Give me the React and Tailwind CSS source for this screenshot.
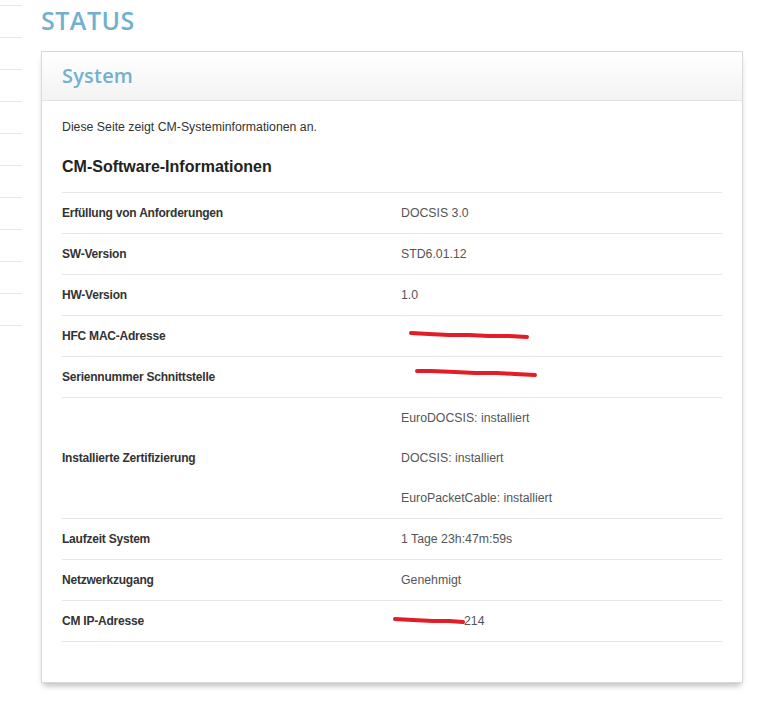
import React from "react";

const Scribble = ({ w, h, pts }) => (
  <svg width={w} height={h} className="block" viewBox={`0 0 ${w} ${h}`}>
    <polyline
      points={pts}
      fill="none"
      stroke="#e21d25"
      strokeWidth="4"
      strokeLinecap="round"
      strokeLinejoin="round"
    />
  </svg>
);

const Row = ({ label, children }) => (
  <div className="flex h-[41px] items-center border-b border-[#e6e6e6]">
    <div className="w-[339px] text-[12px] font-bold tracking-[-0.22px] text-[#333]">{label}</div>
    <div className="flex-1 text-[12.3px] text-[#555]">{children}</div>
  </div>
);

export default function App() {
  return (
    <div
      className="relative h-[707px] w-[769px] overflow-hidden bg-white"
      style={{ fontFamily: '"Liberation Sans", Arial, sans-serif' }}
    >
      <div className="flex">
        <div className="flex w-[22px] flex-col pt-[5px]">
          {Array.from({ length: 11 }).map((_, i) => (
            <div key={i} className="h-[32px] border-t border-[#e8e8e8]" />
          ))}
        </div>
        <div className="ml-[19px] flex flex-col">
          <div
            className="h-[51px] pt-[6px] text-[25px] font-semibold leading-[28px] tracking-[0.5px] text-[#72b0d0]"
            style={{ fontFamily: '"Open Sans", sans-serif' }}
          >
            STATUS
          </div>
          <div className="w-[702px] border border-[#d9d9d9] bg-white shadow-[0_5px_6px_-2px_rgba(0,0,0,0.25)]">
            <div
              className="flex h-[49px] items-center border-b border-[#e2e2e2] bg-gradient-to-b from-[#ffffff] to-[#f3f3f3] pl-[20px] text-[20px] font-semibold tracking-[0.2px] text-[#72b0d0]"
              style={{ fontFamily: '"Open Sans", sans-serif' }}
            >
              System
            </div>
            <div className="px-[20px] pb-[40px] text-[12.3px]">
              <div className="pt-[19px] leading-[14px] text-[#333]">
                Diese Seite zeigt CM-Systeminformationen an.
              </div>
              <div className="pt-[24px] pb-[16px] text-[16px] font-bold leading-[18px] text-[#222]">
                CM-Software-Informationen
              </div>
              <div className="border-t border-[#e6e6e6]">
                <Row label="Erfüllung von Anforderungen">DOCSIS 3.0</Row>
                <Row label="SW-Version">STD6.01.12</Row>
                <Row label="HW-Version">1.0</Row>
                <Row label="HFC MAC-Adresse">
                  <div className="ml-[8px] mt-[-1px]">
                    <Scribble w={122} h={10} pts="2,2 20,3 40,4 60,4 80,5 100,5 118,6" />
                  </div>
                </Row>
                <Row label="Seriennummer Schnittstelle">
                  <div className="ml-[14px] mt-[-6px]">
                    <Scribble w={124} h={10} pts="2,2 16,2 40,3 60,4 82,4 100,5 120,6" />
                  </div>
                </Row>
                <div className="flex h-[121px] items-center border-b border-[#e6e6e6]">
                  <div className="w-[339px] text-[12px] font-bold tracking-[-0.22px] text-[#333]">Installierte Zertifizierung</div>
                  <div className="flex-1 text-[12.3px] text-[#555]">
                    <div className="flex h-[40px] items-center">EuroDOCSIS: installiert</div>
                    <div className="flex h-[40px] items-center">DOCSIS: installiert</div>
                    <div className="flex h-[40px] items-center">EuroPacketCable: installiert</div>
                  </div>
                </div>
                <Row label="Laufzeit System">1 Tage 23h:47m:59s</Row>
                <Row label="Netzwerkzugang">Genehmigt</Row>
                <Row label="CM IP-Adresse">
                  <div className="ml-[-8px] flex items-center">
                    <Scribble w={72} h={8} pts="2,2 20,3 40,4 56,4 70,5" />
                    <span className="ml-[-1px]">214</span>
                  </div>
                </Row>
              </div>
            </div>
          </div>
        </div>
      </div>
    </div>
  );
}
